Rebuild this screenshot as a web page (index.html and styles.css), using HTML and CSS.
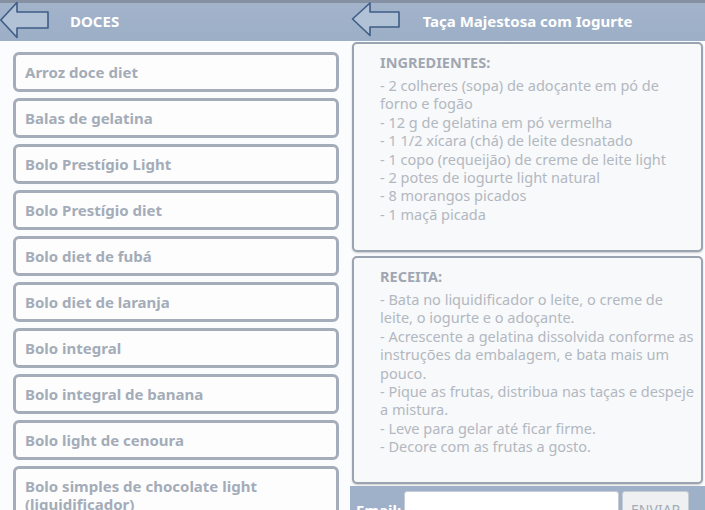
FILE: index.html
```html
<!DOCTYPE html>
<html lang="pt-BR">
<head>
    <meta charset="UTF-8">
    <meta name="viewport" content="width=device-width, initial-scale=1.0">
    <title>Receitas Diet</title>
    <link rel="stylesheet" href="styles.css">
</head>
<body>
    <div class="screen list-screen">
        <div class="topbar">
            <button class="back" aria-label="Voltar">
                <svg width="50" height="41" viewBox="0 0 50 41">
                    <path d="M0.8 20 L17 2.5 L17 12 L48 12 L48 28 L17 28 L17 37.5 Z" fill="#b1c1d6" stroke="#3f5d86" stroke-width="1.6" stroke-linejoin="round"/>
                </svg>
            </button>
            <h1 class="title">DOCES</h1>
        </div>
        <ul class="recipes">
            <li>Arroz doce diet</li>
            <li>Balas de gelatina</li>
            <li>Bolo Prestígio Light</li>
            <li>Bolo Prestígio diet</li>
            <li>Bolo diet de fubá</li>
            <li>Bolo diet de laranja</li>
            <li>Bolo integral</li>
            <li>Bolo integral de banana</li>
            <li>Bolo light de cenoura</li>
            <li>Bolo simples de chocolate light (liquidificador)</li>
        </ul>
    </div>

    <div class="screen detail-screen">
        <div class="topbar">
            <button class="back" aria-label="Voltar">
                <svg width="50" height="41" viewBox="0 0 50 41">
                    <path d="M2.5 19 L20 3 L20 12 L49 12 L49 27 L20 27 L20 35.5 Z" fill="#b1c1d6" stroke="#3f5d86" stroke-width="1.6" stroke-linejoin="round"/>
                </svg>
            </button>
            <h1 class="title centered">Taça Majestosa com Iogurte</h1>
        </div>
        <div class="panel ingredients">
            <h2>INGREDIENTES:</h2>
            <p>- 2 colheres (sopa) de adoçante em pó de forno e fogão<br>
            - 12 g de gelatina em pó vermelha<br>
            - 1 1/2 xícara (chá) de leite desnatado<br>
            - 1 copo (requeijão) de creme de leite light<br>
            - 2 potes de iogurte light natural<br>
            - 8 morangos picados<br>
            - 1 maçã picada</p>
        </div>
        <div class="panel method">
            <h2>RECEITA:</h2>
            <p>- Bata no liquidificador o leite, o creme de leite, o iogurte e o adoçante.<br>
            - Acrescente a gelatina dissolvida conforme as instruções da embalagem, e bata mais um pouco.<br>
            - Pique as frutas, distribua nas taças e despeje a mistura.<br>
            - Leve para gelar até ficar firme.<br>
            - Decore com as frutas a gosto.</p>
        </div>
        <form class="mailbar">
            <label for="email">Email:</label>
            <input type="text" id="email">
            <button type="button" class="send">ENVIAR</button>
        </form>
    </div>
</body>
</html>
```

FILE: styles.css
```css
body {
    margin: 0;
    width: 705px;
    height: 510px;
    overflow: hidden;
    display: flex;
    font-family: "Noto Sans", "Open Sans", sans-serif;
    background-color: #fbfcfd;
}

.screen {
    display: flex;
    flex-direction: column;
    overflow: hidden;
}

.screen > * {
    flex-shrink: 0;
}

.list-screen {
    width: 350px;
}

.detail-screen {
    width: 355px;
}

.topbar {
    height: 41px;
    display: flex;
    align-items: center;
    background: linear-gradient(#8591a2 0, #8591a2 3px, #a2b3ca 3px, #9cafc7 100%);
}

.back {
    border: none;
    background: none;
    padding: 0;
    width: 50px;
    height: 41px;
    cursor: pointer;
}

.back svg {
    display: block;
}

.title {
    margin: 0 0 0 20px;
    font-size: 15px;
    font-weight: bold;
    color: #ffffff;
}

.title.centered {
    margin: 0;
    flex: 1;
    text-align: center;
    padding-right: 50px;
}

.recipes {
    list-style: none;
    margin: 0;
    padding: 11px 11px 0 13px;
    display: flex;
    flex-direction: column;
    gap: 6px;
}

.recipes li {
    min-height: 34px;
    padding: 0 9px;
    display: flex;
    align-items: center;
    border: 3px solid #a5adba;
    border-radius: 6px;
    background-color: #fdfdfe;
    color: #a4acb8;
    font-size: 15px;
    font-weight: bold;
    line-height: 18px;
}

.recipes li:last-child {
    padding-top: 8px;
    padding-bottom: 4px;
    align-items: flex-start;
}

.panel {
    box-sizing: border-box;
    margin: 1px 2px 0 2px;
    padding: 8px 5px 10px 26px;
    border: 2px solid #9aa3b0;
    border-radius: 5px;
    background-color: #f8f9fa;
    box-shadow: 0 1px 2px rgba(0, 0, 0, 0.2);
    color: #b2b8c1;
}

.ingredients {
    height: 210px;
}

.method {
    margin-top: 4px;
    height: 228px;
}

.panel h2 {
    margin: 0 0 4px;
    font-size: 14.5px;
    color: #a0a7b2;
}

.panel p {
    margin: 0;
    font-size: 14.5px;
    line-height: 18.4px;
}

.mailbar {
    margin-top: 2px;
    height: 54px;
    display: flex;
    align-items: flex-start;
    gap: 3px;
    padding: 5px 15px 0 6px;
    background-color: #9fb1c8;
}

.mailbar label {
    margin-top: 9px;
    color: #ffffff;
    font-weight: bold;
    font-size: 15px;
}

.mailbar input {
    width: 215px;
    height: 44px;
    border: 1px solid #c5ccd6;
    border-radius: 3px;
    background-color: #ffffff;
    box-sizing: border-box;
}

.send {
    height: 36px;
    width: 67px;
    border: 1px solid #c6ccd4;
    border-radius: 3px;
    background-color: #eef0f2;
    color: #a4abb5;
    font-family: inherit;
    font-size: 14px;
    padding: 0;
}
```
